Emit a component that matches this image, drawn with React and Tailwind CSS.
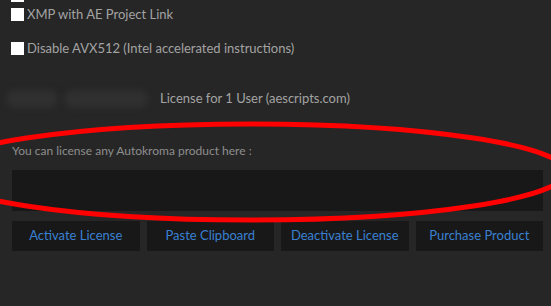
import React from "react"

const font = { fontFamily: 'Lato, "Noto Sans", sans-serif' }

function Check({ label, className }) {
    return (
        <div className={"flex items-center h-[13px] " + className}>
            <span className="w-[13px] h-[13px] bg-white shrink-0"></span>
            <span className="ml-[3px] text-[13px] leading-none text-[#a3a3a3] whitespace-nowrap">{label}</span>
        </div>
    )
}

const buttons = ["Activate License", "Paste Clipboard", "Deactivate License", "Purchase Product"]

export default function App() {
    return (
        <div className="relative w-[551px] h-[306px] bg-[#262626] overflow-hidden" style={font}>
            <div className="pl-[11px] flex flex-col">
                <span className="w-[13px] h-[2px] bg-white"></span>
                <Check label="XMP with AE Project Link" className="mt-[6px]" />
                <Check label="Disable AVX512 (Intel accelerated instructions)" className="mt-[21px]" />
            </div>

            <div className="mt-[32px] h-[24px] flex items-center">
                <div className="ml-[6px] w-[52px] h-[18px] rounded-full bg-[#303030] blur-[3px]"></div>
                <div className="ml-[6px] w-[84px] h-[18px] rounded-full bg-[#303030] blur-[3px]"></div>
                <span className="ml-[12px] text-[13px] text-[#a3a3a3] whitespace-nowrap">License for 1 User (aescripts.com)</span>
            </div>

            <div className="px-[12px]">
                <p className="mt-[33px] text-[12px] leading-[14px] text-[#8e8e8e]">You can license any Autokroma product here :</p>
                <div className="mt-[12px] w-[531px] h-[41px] bg-[#181818]"></div>
                <div className="mt-[10px] w-[531px] grid grid-cols-4 gap-[7px]">
                    {buttons.map(b => (
                        <button key={b} className="h-[30px] bg-[#181818] text-[13px] text-[#3a80d2] whitespace-nowrap">{b}</button>
                    ))}
                </div>
            </div>

            {/* red annotation drawn over the form */}
            <svg className="absolute left-0 top-0 pointer-events-none" width="551" height="306" viewBox="0 0 551 306">
                <ellipse cx="250" cy="172" rx="316" ry="48" fill="none" stroke="#ff0000" strokeWidth="5" />
            </svg>
        </div>
    )
}
